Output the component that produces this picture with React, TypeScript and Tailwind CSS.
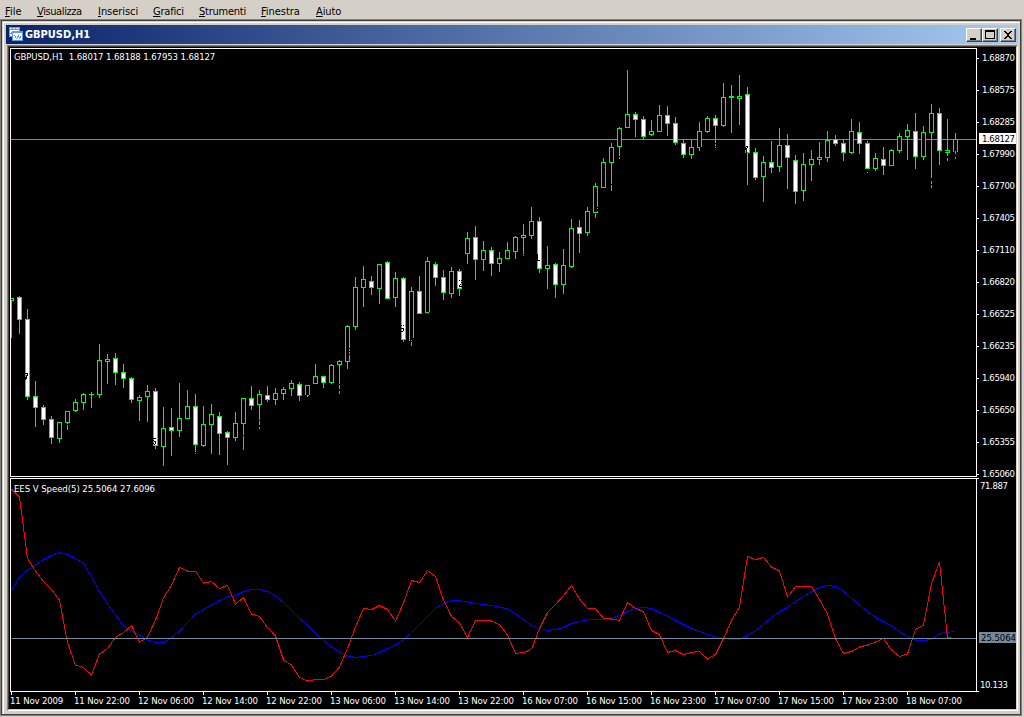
import React from 'react';

const MENU_ITEMS = [
  { label: 'File', className: 'w-[32px] tracking-[0px]' },
  { label: 'Visualizza', className: 'w-[61px] tracking-[-0.4px]' },
  { label: 'Inserisci', className: 'w-[55px] tracking-[-0.05px]' },
  { label: 'Grafici', className: 'w-[46px] tracking-[-0.2px]' },
  { label: 'Strumenti', className: 'w-[62px] tracking-[-0.25px]' },
  { label: 'Finestra', className: 'w-[55px] tracking-[-0.05px]' },
  { label: 'Aiuto', className: 'w-[40px] tracking-[-0.1px]' },
];

const PRICE_LABELS = [
  '1.68870', '1.68575', '1.68285', '1.67990', '1.67700', '1.67405', '1.67110',
  '1.66820', '1.66525', '1.66235', '1.65940', '1.65650', '1.65355', '1.65060',
];

const TIME_LABELS = [
  '11 Nov 2009', '11 Nov 22:00', '12 Nov 06:00', '12 Nov 14:00', '12 Nov 22:00',
  '13 Nov 06:00', '13 Nov 14:00', '13 Nov 22:00', '16 Nov 07:00', '16 Nov 15:00',
  '16 Nov 23:00', '17 Nov 07:00', '17 Nov 15:00', '17 Nov 23:00', '18 Nov 07:00',
];

const FIRST_X = 11;
const STEP = 8;

// high, body top, body bottom, low, 1 = bearish (filled)
const CANDLES: number[][] = [
  [298, 298, 301, 338, 0], [296, 297, 320, 334, 1], [309, 319, 397, 400, 1], [381, 396, 408, 427, 1],
  [405, 407, 420, 425, 1], [416, 419, 438, 444, 1], [422, 422, 439, 443, 0], [411, 411, 423, 430, 0],
  [399, 402, 411, 412, 0], [393, 394, 403, 410, 0], [392, 394, 395, 408, 0], [344, 360, 395, 398, 0],
  [354, 359, 362, 384, 0], [353, 358, 373, 385, 1], [364, 372, 379, 388, 1], [377, 378, 400, 403, 1],
  [395, 397, 401, 421, 0], [385, 391, 397, 422, 0], [388, 391, 446, 449, 1], [407, 428, 447, 466, 0],
  [408, 427, 431, 456, 1], [383, 418, 431, 437, 0], [390, 406, 419, 419, 0], [394, 406, 445, 454, 1],
  [406, 424, 446, 447, 0], [404, 414, 425, 454, 0], [412, 416, 434, 455, 1], [431, 432, 438, 465, 1],
  [412, 423, 438, 441, 0], [398, 398, 424, 450, 0], [386, 398, 406, 410, 1], [390, 394, 405, 429, 0],
  [386, 395, 400, 402, 1], [388, 393, 400, 405, 0], [387, 389, 394, 400, 0], [380, 383, 389, 396, 0],
  [382, 384, 396, 401, 1], [385, 385, 396, 397, 0], [364, 376, 384, 384, 0], [376, 376, 383, 388, 1],
  [364, 365, 383, 384, 0], [360, 361, 365, 394, 0], [325, 326, 362, 369, 0], [277, 287, 327, 330, 0],
  [266, 279, 288, 307, 0], [276, 281, 288, 295, 1], [264, 264, 289, 304, 0], [261, 262, 299, 299, 1],
  [272, 278, 298, 307, 0], [277, 278, 340, 342, 1], [287, 291, 341, 346, 0], [276, 291, 314, 314, 1],
  [257, 261, 313, 313, 0], [262, 264, 278, 286, 1], [270, 277, 293, 300, 1], [267, 271, 294, 298, 0],
  [269, 271, 289, 296, 1], [232, 238, 254, 264, 0], [226, 237, 260, 280, 1], [241, 250, 260, 271, 0],
  [247, 250, 264, 276, 1], [252, 258, 264, 272, 0], [242, 250, 259, 259, 0], [236, 237, 252, 259, 0],
  [224, 235, 238, 256, 0], [207, 221, 236, 239, 0], [217, 221, 269, 273, 1], [246, 265, 269, 289, 0],
  [263, 264, 285, 298, 1], [249, 265, 285, 294, 0], [219, 228, 267, 268, 0], [220, 227, 234, 253, 1],
  [207, 211, 233, 236, 0], [183, 186, 213, 218, 0], [158, 162, 188, 188, 0], [143, 147, 163, 191, 0],
  [127, 128, 147, 159, 0], [70, 114, 128, 128, 0], [112, 114, 120, 137, 1], [116, 119, 137, 139, 1],
  [120, 131, 135, 136, 0], [105, 115, 132, 132, 0], [106, 115, 124, 136, 1], [117, 123, 143, 145, 1],
  [139, 143, 155, 158, 1], [140, 147, 155, 159, 0], [122, 131, 148, 151, 0], [116, 118, 132, 133, 0],
  [115, 118, 126, 148, 1], [83, 97, 126, 127, 0], [85, 96, 98, 133, 0], [75, 96, 99, 125, 0],
  [87, 94, 153, 185, 1], [148, 152, 178, 180, 1], [156, 162, 177, 202, 0], [141, 162, 168, 173, 1],
  [128, 145, 167, 172, 0], [134, 145, 158, 189, 1], [155, 160, 192, 204, 1], [153, 164, 191, 201, 0],
  [150, 159, 165, 181, 0], [142, 157, 160, 165, 0], [131, 140, 158, 162, 0], [135, 139, 144, 146, 1],
  [139, 143, 153, 161, 1], [119, 131, 153, 154, 0], [122, 132, 144, 154, 1], [141, 143, 169, 173, 1],
  [153, 158, 169, 171, 0], [147, 159, 166, 175, 1], [149, 150, 166, 166, 0], [133, 136, 151, 153, 0],
  [124, 130, 137, 160, 0], [113, 131, 157, 169, 1], [126, 132, 157, 160, 0], [104, 113, 133, 188, 0],
  [108, 113, 151, 165, 1], [119, 150, 153, 161, 0], [133, 139, 152, 159, 0],
];

// black count marks printed over the candles: x, y, width, height
const MARKS: number[][] = [
  [25, 373, 3, 1], [27, 374, 1, 2], [26, 375, 1, 4], [25, 377, 1, 3],
  [67, 424, 1, 1],
  [153, 438, 2, 1], [155, 438, 1, 1], [153, 440, 1, 1], [154, 441, 2, 1], [155, 442, 1, 2], [153, 443, 1, 1], [154, 444, 1, 1],
  [195, 452, 1, 1], [251, 435, 1, 1], [243, 435, 1, 1],
  [259, 420, 1, 1], [259, 425, 1, 2], [305, 395, 2, 1], [309, 395, 1, 1],
  [339, 384, 1, 1], [339, 389, 1, 2],
  [349, 348, 1, 1], [349, 351, 1, 1], [349, 354, 1, 1],
  [401, 325, 1, 1], [403, 325, 1, 1], [401, 328, 3, 1], [403, 329, 1, 2], [401, 331, 2, 1],
  [413, 338, 1, 4], [410, 340, 1, 1], [412, 340, 1, 1], [411, 341, 1, 1], [429, 312, 1, 1],
  [459, 280, 1, 1], [461, 280, 1, 1], [460, 284, 1, 1], [459, 285, 1, 2], [460, 286, 2, 1], [461, 282, 1, 1],
  [523, 254, 1, 1], [537, 254, 1, 7], [538, 260, 2, 1],
  [597, 207, 1, 1], [597, 209, 1, 2], [595, 213, 1, 1],
  [611, 184, 1, 1], [619, 156, 1, 1], [700, 147, 2, 1],
  [715, 143, 1, 1], [715, 146, 1, 1],
  [746, 146, 2, 1], [745, 147, 1, 3], [747, 147, 1, 1], [746, 148, 1, 5],
  [867, 169, 1, 3], [931, 178, 1, 3], [931, 184, 1, 1],
  [947, 156, 1, 2], [945, 151, 1, 1], [948, 151, 1, 1],
  [954, 151, 1, 1], [956, 151, 1, 1], [955, 154, 1, 3],
];

const SPEED = [
  489, 497, 558.5, 571, 581.5, 589.5, 600, 643, 665, 667.5, 675, 654, 648.5, 637.5, 632.5, 625.5,
  642, 637.5, 620, 598, 585, 567.5, 571, 571, 583, 581.5, 588.5, 585.5, 604, 597.5, 614, 616.5,
  627.5, 636, 660, 665, 677.5, 681, 679.5, 679.5, 676, 667, 648.5, 627, 608.5, 609.5, 605.5, 609.5,
  621, 603, 580.5, 582.5, 570.5, 576.5, 600, 616.5, 623, 637.5, 620.5, 620.5, 621, 624.5, 635, 653.5,
  652.5, 649.5, 628.5, 612.5, 604.5, 595.5, 585.5, 599, 608.5, 608.5, 618.5, 619, 620.5, 602.5, 608.5, 611.5,
  630.5, 634.5, 652.5, 650.5, 654.5, 652.5, 651.5, 659, 654.5, 638.5, 620.5, 607, 556.5, 559.5, 557.5, 567,
  571, 597, 586.5, 586.5, 586.5, 599.5, 614, 638.5, 653.5, 651.5, 647, 645, 642, 638.5, 650, 656.5,
  654, 629.5, 625, 583.5, 562, 637.5,
];

const AVERAGE = [
  590, 577, 570, 565, 559.5, 555.5, 552.5, 554.5, 558.5, 563.5, 577, 591.5, 604, 615, 626, 631,
  635, 640, 642.5, 642.5, 638, 631, 622.5, 614, 609.5, 605, 600.5, 597, 595.5, 591.5, 589.5, 589.5,
  591.5, 596, 602.5, 610.5, 618.5, 625, 633, 640.5, 647, 652, 656, 657.5, 656.5, 655.5, 652.5, 648.5,
  645, 639.5, 632.5, 624.5, 616.5, 608.5, 603.5, 600.5, 600.5, 602, 603.5, 604.5, 605.5, 607, 609, 614,
  619.5, 625.5, 629, 630.5, 629.5, 627.5, 623.5, 621.5, 620, 619.5, 619, 618.5, 615.5, 611.5, 608.5, 607.5,
  608.5, 612.5, 616, 620.5, 624.5, 628.5, 631.5, 634.5, 637, 638.5, 639.5, 639.5, 635.5, 630.5, 624.5, 617.5,
  611.5, 607.5, 601.5, 596.5, 591.5, 587.5, 585.5, 586.5, 591, 598.5, 605, 611.5, 617.5, 621.5, 626, 631.5,
  636.5, 640, 641, 639, 633.5, 632.5, 631,
];

const toPoints = (values: number[]) =>
  values.map((y, i) => `${FIRST_X + STEP * i + 0.5},${y}`).join(' ');

const Candle: React.FC<{ x: number; data: number[] }> = ({ x, data }) => {
  const [high, top, bottom, low, filled] = data;
  return (
    <g>
      <rect x={x} y={high} width={1} height={low - high} fill="#00ff00" />
      <rect x={x - 2} y={top} width={5} height={bottom - top} fill="#00ff00" />
      {bottom - top > 2 && (
        <rect x={x - 1} y={top + 1} width={3} height={bottom - top - 2} fill={filled ? '#fff' : '#000'} />
      )}
    </g>
  );
};

const MenuBar: React.FC = () => (
  <div className="flex h-[19px] shrink-0 bg-[#d4d0c8] pl-[5px] pt-[5px] text-[11px] leading-[14px] text-black">
    {MENU_ITEMS.map(item => (
      <div key={item.label} className={item.className}>
        <span className="underline underline-offset-1">{item.label[0]}</span>
        {item.label.slice(1)}
      </div>
    ))}
  </div>
);

const ChartIcon: React.FC = () => (
  <svg width="15" height="15" viewBox="0 0 15 15" shapeRendering="crispEdges">
    <rect width="11" height="10" fill="#5b9bf0" />
    <rect x="1" y="3" width="9" height="6" fill="#fff" />
    <path d="M1 1.5h2M4 1.5h2M7 1.5h3" stroke="#d6e6ff" />
    <path d="M1 6.5h1v-1h1v1h1v1" stroke="#5b9bf0" fill="none" />
    <rect x="3" y="4" width="11" height="10" fill="#5b9bf0" />
    <rect x="4" y="6" width="9" height="7" fill="#fff" />
    <path d="M5 8.5h1M6.5 9v2M7.5 11v1M8.5 9v2M9.5 8v2M10.5 10v2M11.5 9v2" stroke="#5b9bf0" fill="none" />
  </svg>
);

const WindowButton: React.FC<{ children: React.ReactNode }> = ({ children }) => (
  <button className="flex h-[14px] w-4 border-b border-l border-r border-t border-b-[#404040] border-l-white border-r-[#404040] border-t-white bg-[#d4d0c8] shadow-[inset_-1px_-1px_0_#808080]">
    <svg width="14" height="12" viewBox="0 0 14 12" shapeRendering="crispEdges">
      {children}
    </svg>
  </button>
);

const TitleBar: React.FC = () => (
  <div className="flex h-[19px] shrink-0 items-center bg-gradient-to-r from-[#0a246a] to-[#a6caf0] [--tw-gradient-position:to_right_in_srgb] pl-[3px] pr-[2px]">
    <ChartIcon />
    <span className="ml-px grow whitespace-pre pt-[2px] text-[11px] font-bold tracking-[-0.02px] text-white">GBPUSD,H1</span>
    <WindowButton>
      <rect x="3" y="9" width="6" height="2" />
    </WindowButton>
    <WindowButton>
      <path d="M2 1h10v9H2zM3 3v6h8V3z" fillRule="evenodd" />
    </WindowButton>
    <div className="w-[2px]" />
    <WindowButton>
      <path d="M3 2h2v1h1v1h2v-1h1v-1h2v1h-1v1h-1v1h-1v2h1v1h1v1h1v1h-2v-1h-1v-1h-2v1h-1v1h-2v-1h1v-1h1v-1h1v-2h-1v-1h-1v-1h-1z" />
    </WindowButton>
  </div>
);

const PricePane: React.FC = () => (
  <div className="flex h-[429px]">
    <div className="relative h-[429px] w-[967px] border border-white">
      <svg className="block" width="965" height="427" viewBox="11 49 965 427" shapeRendering="crispEdges">
        <rect x="11" y="139" width="965" height="1" fill="#778899" />
        {CANDLES.map((c, i) => <Candle key={i} x={FIRST_X + STEP * i} data={c} />)}
        {MARKS.map(([x, y, w, h], i) => <rect key={i} x={x} y={y} width={w} height={h} fill="#000" />)}
      </svg>
      <span className="absolute left-[3px] top-[2px] whitespace-pre leading-3 tracking-[-0.1px]">
        GBPUSD,H1  1.68017 1.68188 1.67953 1.68127
      </span>
    </div>
    <div className="relative w-[39px] -mt-[6px]">
      {PRICE_LABELS.map(p => (
        <div key={p} className="flex h-8 items-center">
          <span className="mr-[3px] h-px w-[2px] bg-white" />
          <span className="tracking-[-0.4px]">{p}</span>
        </div>
      ))}
      <div className="absolute left-[2px] top-[91px] h-[11px] w-[37px] bg-white pl-[3px] leading-[11px] tracking-[-0.4px] text-black">
        1.68127
      </div>
    </div>
  </div>
);

const IndicatorPane: React.FC = () => (
  <div className="mt-px flex h-[214px]">
    <div className="relative h-[214px] w-[967px] border border-white">
      <svg className="block" width="965" height="212" viewBox="11 479 965 212" shapeRendering="crispEdges" fill="none">
        <polyline points={toPoints(AVERAGE)} stroke="#0000ff" />
        <polyline points={`${toPoints(SPEED)} 951,637.5`} stroke="#ff0000" />
        <rect x="12" y="638" width="964" height="1" fill="#778899" />
      </svg>
      <span className="absolute left-[3px] top-[4px] whitespace-pre leading-3 tracking-[-0.05px]">
        EES V Speed(5) 25.5064 27.6096
      </span>
    </div>
    <div className="relative w-[39px]">
      <div className="flex h-full flex-col justify-between pb-px pl-[3px] tracking-[-0.4px]">
        <span className="pt-[2px] leading-3">71.887</span>
        <span className="leading-3">10.133</span>
      </div>
      <div className="absolute left-[2px] top-[154px] h-[11px] w-[37px] bg-[#778899] pl-[2px] leading-[11px] tracking-[-0.05px] text-black">
        25.5064
      </div>
      <span className="absolute left-0 top-0 h-px w-[2px] bg-white" />
      <span className="absolute bottom-0 left-0 h-px w-[2px] bg-white" />
    </div>
  </div>
);

const TimeAxis: React.FC = () => (
  <div className="flex pl-px">
    {TIME_LABELS.map(t => (
      <div key={t} className="w-16 shrink-0">
        <div className="h-[3px] w-px bg-white" />
        <div className="-ml-px whitespace-pre leading-3 tracking-[-0.15px]">{t}</div>
      </div>
    ))}
  </div>
);

const App: React.FC = () => {
  return (
    <div className="flex h-[717px] w-[1024px] cursor-default select-none flex-col overflow-hidden bg-[#d4d0c8] font-['DejaVu_Sans_Condensed','DejaVu_Sans',sans-serif]">
      <MenuBar />
      <div className="h-[697px] w-[1022px] border border-[#808080]">
        <div className="h-[695px] border border-[#404040]">
          <div className="h-[693px] border-l border-t border-[#d4d0c8]">
            <div className="flex h-[692px] flex-col border-l border-t border-white bg-[#d4d0c8] pl-[2px] pr-[2px] pt-[2px]">
              <TitleBar />
              <div className="mt-px h-[666px] border-b border-l border-r border-t border-b-white border-l-[#808080] border-r-white border-t-[#808080] ml-px">
                <div className="h-[664px] border-b border-l border-r border-t border-b-[#d4d0c8] border-l-[#404040] border-r-[#d4d0c8] border-t-[#404040] bg-black pl-px pt-px text-[9.5px] text-white">
                  <PricePane />
                  <IndicatorPane />
                  <TimeAxis />
                </div>
              </div>
            </div>
          </div>
        </div>
      </div>
    </div>
  );
};

export default App;
